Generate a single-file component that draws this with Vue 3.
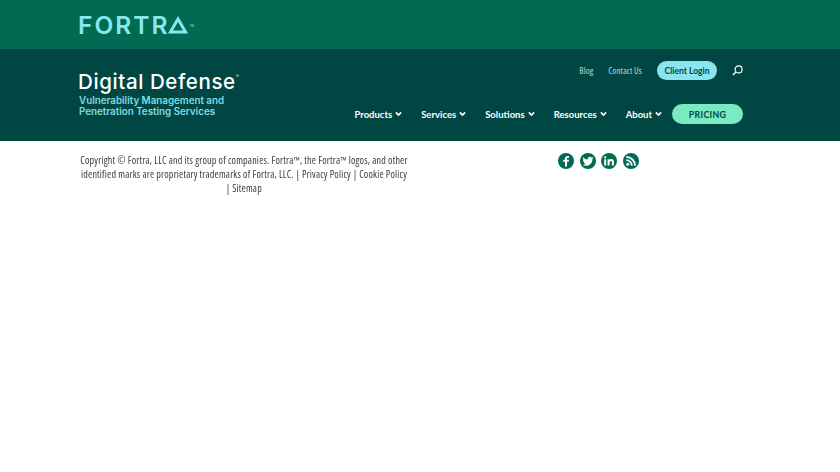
<script setup>
const navItems = ['Products', 'Services', 'Solutions', 'Resources', 'About']
</script>

<template>
  <div class="page">
    <div class="brand-bar">
      <div class="fortra">
        <span>FORTR</span>
        <svg class="fortra-a" viewBox="0 0 20 18" width="20" height="18">
          <path d="M10 3 17.600 16H2.400Z" fill="none" stroke="#8ae6ee" stroke-width="3" />
        </svg>
        <span class="tm">TM</span>
      </div>
    </div>

    <header class="site-head">
      <div class="logo">
        <div class="logo-name">Digital Defense<sup>®</sup></div>
        <div class="logo-sub">Vulnerability Management and<br />Penetration Testing Services</div>
      </div>

      <div class="menus">
        <div class="top-menu">
          <a class="small-link">Blog</a>
          <a class="small-link">Contact Us</a>
          <a class="login">Client Login</a>
          <svg class="search" viewBox="0 0 12 12" width="11" height="11">
            <circle cx="7.200" cy="4.800" r="3.800" fill="none" stroke="#fff" stroke-width="1.300" />
            <path d="M4.400 7.600 1 11" stroke="#fff" stroke-width="1.600" />
          </svg>
        </div>
        <nav class="main-nav">
          <a v-for="item in navItems" :key="item" class="nav-item">
            {{ item }}
            <svg viewBox="0 0 8 6" width="7" height="6">
              <path d="M1 1.200 4 4.200 7 1.200" fill="none" stroke="#fff" stroke-width="1.800" />
            </svg>
          </a>
          <a class="pricing">PRICING</a>
        </nav>
      </div>
    </header>

    <footer class="foot">
      <p class="copy">
        Copyright © Fortra, LLC and its group of companies. Fortra™, the Fortra™ logos, and other
        identified marks are proprietary trademarks of Fortra, LLC. |&nbsp;Privacy Policy&nbsp;|&nbsp;Cookie&nbsp;Policy
        | Sitemap
      </p>
      <div class="social">
        <span class="soc">
          <svg viewBox="0 0 16 16" width="16" height="16">
            <circle cx="8" cy="8" r="8" fill="#006a53" />
            <path d="M9 13.500V8.800h1.700l.3-2H9V5.700c0-.6.200-.9.900-.9h1.100V3c-.2 0-.8-.1-1.500-.1-1.500 0-2.500.9-2.500 2.500v1.400H5.200v2H7v4.700Z" fill="#fff" />
          </svg>
        </span>
        <span class="soc">
          <svg viewBox="0 0 16 16" width="16" height="16">
            <circle cx="8" cy="8" r="8" fill="#006a53" />
            <path d="M13.400 4.700c-.4.200-.9.300-1.300.4.500-.3.800-.7 1-1.200-.4.300-.9.400-1.400.5a2.300 2.300 0 0 0-3.900 2.100A6.300 6.300 0 0 1 3.200 4.200a2.300 2.300 0 0 0 .7 3c-.4 0-.7-.1-1-.3 0 1.100.8 2 1.800 2.200-.3.100-.7.100-1 .1.300.9 1.100 1.500 2.100 1.600a4.600 4.600 0 0 1-3.300.9 6.400 6.400 0 0 0 9.900-5.700c.4-.3.800-.8 1-1.300Z" fill="#fff" />
          </svg>
        </span>
        <span class="soc">
          <svg viewBox="0 0 16 16" width="16" height="16">
            <circle cx="8" cy="8" r="8" fill="#006a53" />
            <path d="M3.200 6.300h2v6.200h-2ZM4.200 3.200a1.100 1.100 0 1 1 0 2.300 1.100 1.100 0 0 1 0-2.300ZM6.600 6.300h1.900v.9c.3-.5 1-1.100 2-1.100 2 0 2.400 1.300 2.400 3v3.400h-2V9.500c0-.7 0-1.600-1-1.600s-1.300.8-1.300 1.600v3h-2Z" fill="#fff" />
          </svg>
        </span>
        <span class="soc">
          <svg viewBox="0 0 16 16" width="16" height="16">
            <circle cx="8" cy="8" r="8" fill="#006a53" />
            <circle cx="4.700" cy="11.300" r="1.500" fill="#fff" />
            <path d="M3.200 7.100a5.700 5.700 0 0 1 5.700 5.700M3.200 3.900a8.900 8.900 0 0 1 8.900 8.900" fill="none" stroke="#fff" stroke-width="1.800" />
          </svg>
        </span>
      </div>
    </footer>
  </div>
</template>

<style scoped>
.page {
  width: 840px;
  height: 472px;
  background: #fff;
  overflow: hidden;
  font-family: Lato, "Open Sans", "Liberation Sans", sans-serif;
}

.brand-bar {
  height: 49px;
  background: #006a53;
  padding-left: 78px;
  display: flex;
  align-items: center;
}
.fortra {
  display: flex;
  align-items: center;
  color: #8ae6ee;
  font-family: Inter, "Liberation Sans", sans-serif;
  font-size: 24.500px;
  font-weight: 600;
  letter-spacing: 2px;
}
.fortra-a {
  margin-left: -1px;
}
.tm {
  font-size: 3px;
  align-self: flex-end;
  margin: 0 0 12px 1px;
  letter-spacing: 0;
  opacity: 0.7;
}

.site-head {
  height: 92px;
  background: #004744;
  padding: 0 97px 0 78px;
  display: flex;
  justify-content: space-between;
}
.logo {
  padding-top: 22px;
}
.logo-name {
  color: #fff;
  font-family: Inter, "Liberation Sans", sans-serif;
  font-size: 20.500px;
  font-weight: 500;
  line-height: 22px;
  letter-spacing: 0.6px;
}
.logo-name sup {
  font-size: 5px;
  vertical-align: 11px;
  line-height: 0;
  color: #b5cfcc;
}
.logo-sub {
  margin-top: 2px;
  padding-left: 1px;
  color: #7fdbe0;
  font-family: Inter, "Liberation Sans", sans-serif;
  font-size: 9.800px;
  font-weight: 600;
  line-height: 11px;
}

.menus {
  display: flex;
  flex-direction: column;
  align-items: flex-end;
}
.top-menu {
  height: 19px;
  margin-top: 12px;
  display: flex;
  align-items: center;
  color: #fff;
}
.small-link {
  font-family: "Open Sans", sans-serif;
  font-size: 9px;
  font-stretch: condensed;
  letter-spacing: 0.1px;
  color: #c6d8d6;
  margin-right: 15px;
}
.login {
  width: 60px;
  height: 19px;
  border-radius: 10px;
  background: #8ae6ee;
  color: #004744;
  font-size: 8.500px;
  font-weight: 700;
  display: flex;
  align-items: center;
  justify-content: center;
  margin-right: 15px;
}
.search {
  display: block;
}

.main-nav {
  margin-top: 24px;
  display: flex;
  align-items: center;
}
.nav-item {
  color: #fff;
  font-size: 9.500px;
  font-weight: 700;
  display: flex;
  align-items: center;
  gap: 3px;
  margin-right: 19px;
}
.nav-item:nth-child(5) {
  margin-right: 10px;
}
.pricing {
  width: 71px;
  height: 20px;
  border-radius: 10px;
  background: #7aeac0;
  color: #004744;
  font-size: 8.800px;
  font-weight: 700;
  letter-spacing: 0.3px;
  display: flex;
  align-items: center;
  justify-content: center;
}

.foot {
  display: flex;
  padding: 12px 0 0 78px;
}
.copy {
  width: 332px;
  margin: 0;
  text-align: center;
  color: #3a3a3a;
  font-family: "Open Sans", sans-serif;
  font-size: 10px;
  font-stretch: condensed;
  letter-spacing: 0.2px;
  line-height: 14px;
  will-change: transform;
}
.social {
  margin: 0 0 0 148px;
  display: flex;
  gap: 5.500px;
}
.soc {
  width: 16px;
  height: 16px;
}
.soc svg {
  display: block;
}
</style>
